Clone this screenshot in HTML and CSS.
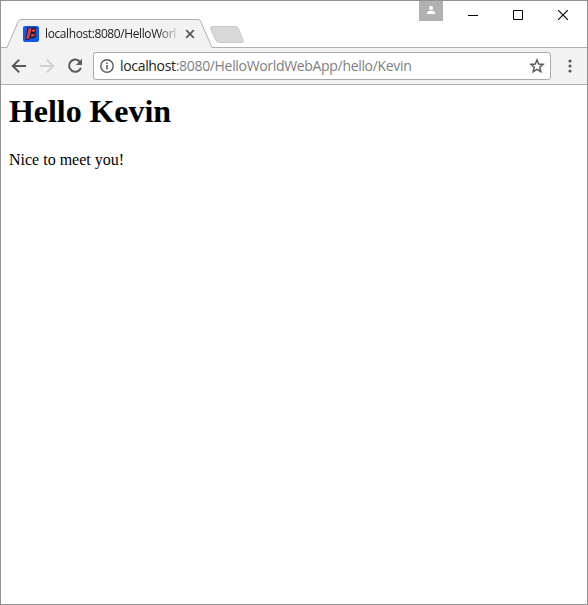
FILE: index.html
```html
<!DOCTYPE html>
<html lang="en">
<head>
<meta charset="utf-8">
<title>Hello Kevin</title>
<link rel="stylesheet" href="styles.css">
</head>
<body>
<div class="window">
  <header class="titlebar">
    <div class="tab">
      <svg class="tab-shape" width="212" height="29" viewBox="0 0 212 29">
        <path d="M0 28.5H6L17.3 2.2Q18.2 .5 20 .5H197Q198.8 .5 199.6 2.2L211 28.5H212V29H0Z" fill="#f2f2f2"/>
        <path d="M0 28.5H6L17.3 2.2Q18.2 .5 20 .5H197Q198.8 .5 199.6 2.2L211 28.5H212" fill="none" stroke="#b0b0b0"/>
      </svg>
      <div class="tab-content">
        <svg class="favicon" width="16" height="16" viewBox="0 0 16 16">
          <rect width="16" height="16" rx="2" fill="#1557ee"/>
          <path d="M4.5 1.5H13L12.5 7L12.8 11L11 12.2H7.5L5.5 14H2.3L3.3 8Z" fill="#161b3c"/>
          <path d="M5.6 2.3H8.6L6 12.8H3.2L4.4 8ZM9.4 3.2H12.2L11.6 5.8H8.8ZM8.4 8H11.8L11.2 10.6H7.8Z" fill="#ed3c2b"/>
        </svg>
        <span class="tab-title">localhost:8080/HelloWorl</span>
        <svg class="tab-close" width="10" height="10" viewBox="0 0 10 10"><path d="M1.2 1.2L8.8 8.8M8.8 1.2L1.2 8.8" stroke="#5a5a5a" stroke-width="1.8"/></svg>
      </div>
    </div>
    <svg class="new-tab" width="36" height="18" viewBox="0 0 36 18"><path d="M3 .5H26.5Q28.5 .5 29.3 2.5L34.3 14.5Q35.1 16.5 33 16.5H10.5Q8 16.5 7 14.5L1.7 3Q.8 .5 3 .5Z" fill="#d9d9d9" stroke="#c8c8c8"/></svg>
    <div class="profile"><svg width="24" height="20" viewBox="0 0 24 20"><circle cx="12" cy="7" r="2" fill="#fff"/><path d="M8 13V11.7C8 10.3 10.2 9.7 12 9.7S16 10.3 16 11.7V13Z" fill="#fff"/></svg></div>
    <div class="controls">
      <svg width="10" height="10" viewBox="0 0 10 10"><path d="M0 5.5H10" stroke="#000"/></svg>
      <svg width="10" height="10" viewBox="0 0 10 10"><path d="M.5 .5H9.5V9.5H.5Z" fill="none" stroke="#000"/></svg>
      <svg width="10" height="10" viewBox="0 0 10 10"><path d="M0 0L10 10M10 0L0 10" stroke="#000" stroke-width="1.1"/></svg>
    </div>
  </header>
  <nav class="toolbar">
    <svg class="nav-icon" width="16" height="16" viewBox="0 0 16 16"><path d="M15 8H2.5M8.2 1.6L1.8 8L8.2 14.4" fill="none" stroke="#5a5a5a" stroke-width="2"/></svg>
    <svg class="nav-icon" width="16" height="16" viewBox="0 0 16 16"><path d="M1 8H13.5M7.8 1.6L14.2 8L7.8 14.4" fill="none" stroke="#d2d2d2" stroke-width="2"/></svg>
    <svg class="nav-icon" width="16" height="16" viewBox="0 0 16 16"><path d="M13.2 4.2A6.1 6.1 0 1 0 13.9 9.8" fill="none" stroke="#5a5a5a" stroke-width="2"/><path d="M15 .8V7H8.8Z" fill="#5a5a5a"/></svg>
    <div class="address">
      <svg width="14" height="14" viewBox="0 0 14 14"><circle cx="7" cy="7" r="6.2" fill="none" stroke="#5a5a5a" stroke-width="1.4"/><path d="M7 6V10.6M7 3.4V5" stroke="#5a5a5a" stroke-width="1.6"/></svg>
      <span class="url"><span class="host">localhost</span>:8080/HelloWorldWebApp/hello/Kevin</span>
      <svg class="star" width="16" height="16" viewBox="0 0 16 16"><path d="M8 2L9.7 6.1L14.1 6.4L10.7 9.3L11.8 13.6L8 11.3L4.2 13.6L5.3 9.3L1.9 6.4L6.3 6.1Z" fill="none" stroke="#5a5a5a" stroke-width="1.5"/></svg>
    </div>
    <svg class="menu" width="4" height="14" viewBox="0 0 4 14"><g fill="#5a5a5a"><circle cx="2" cy="2" r="1.6"/><circle cx="2" cy="7" r="1.6"/><circle cx="2" cy="12" r="1.6"/></g></svg>
  </nav>
  <main class="page">
    <h1>Hello Kevin</h1>
    <p>Nice to meet you!</p>
  </main>
</div>
</body>
</html>
```
FILE: styles.css
```css
* { box-sizing: border-box; }
body { margin: 0; background: #fff; }
svg { display: block; flex: none; }
.window {
  height: 605px;
  border: 1px solid #919191;
  display: flex;
  flex-direction: column;
  overflow: hidden;
}
.titlebar {
  height: 47px;
  display: flex;
  flex: none;
  background: linear-gradient(#b0b0b0, #b0b0b0) bottom / 100% 1px no-repeat;
}
.tab {
  display: grid;
  width: 212px;
  height: 29px;
  margin-top: 18px;
}
.tab-shape, .tab-content { grid-area: 1 / 1; }
.tab-content {
  display: flex;
  align-items: center;
  padding-left: 22px;
}
.tab-title {
  width: 136px;
  margin-left: 6px;
  white-space: nowrap;
  font: 12px/16px "Open Sans", sans-serif;
  letter-spacing: -0.4px;
  color: #222;
  -webkit-mask-image: linear-gradient(to right, #000 112px, transparent 136px);
  mask-image: linear-gradient(to right, #000 112px, transparent 136px);
}
.tab-close { margin-left: 4px; }
.new-tab { margin: 25px 0 0 -4px; }
.profile {
  width: 24px;
  height: 20px;
  margin-left: auto;
  background: #b1b1b1;
}
.controls {
  display: flex;
  gap: 35px;
  padding: 9px 19px 0 25px;
}
.toolbar {
  height: 37px;
  flex: none;
  display: flex;
  align-items: center;
  padding-left: 10px;
  background: #f2f2f2;
  border-bottom: 1px solid #b0b0b0;
}
.nav-icon { margin-right: 12px; }
.address {
  width: 458px;
  height: 28px;
  margin-left: -2px;
  display: flex;
  align-items: center;
  padding: 0 5px 0 6px;
  background: #fff;
  border: 1px solid #a8a8a8;
  border-radius: 3px;
}
.url {
  margin-left: 6px;
  white-space: nowrap;
  font: 14px/20px "Open Sans", sans-serif;
  letter-spacing: -0.325px;
  color: #808080;
}
.host { color: #222; }
.star { margin-left: auto; }
.menu { margin-left: 16.5px; }
.page {
  padding: 8px;
  color: #000;
  font: 16px/18px "Liberation Serif", "Times New Roman", serif;
}
.page h1 { margin: 0 0 21px; font-size: 32px; line-height: 37px; letter-spacing: -0.06px; }
.page p { margin: 0; }
```
